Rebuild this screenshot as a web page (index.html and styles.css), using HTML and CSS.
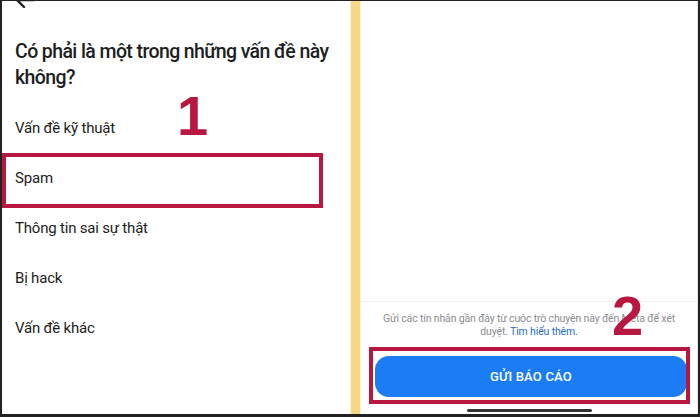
FILE: index.html
```html
<!DOCTYPE html>
<html lang="vi">
<head>
<meta charset="utf-8">
<link rel="stylesheet" href="styles.css">
</head>
<body>
<div class="frame">
  <section class="left">
    <svg class="back" width="22" height="14" viewBox="0 0 22 14"><path d="M20 -1 H4 M10 -7 L3 -1 L10 6" fill="none" stroke="#1c1e21" stroke-width="2.4" stroke-linecap="round" stroke-linejoin="round"/></svg>
    <h1 class="title">Có phải là một trong những vấn đề này không?</h1>
    <ul class="options">
      <li>Vấn đề kỹ thuật</li>
      <li>Spam</li>
      <li>Thông tin sai sự thật</li>
      <li>Bị hack</li>
      <li>Vấn đề khác</li>
    </ul>
    <div class="mark mark-1">1</div>
    <div class="hl hl-spam"></div>
  </section>
  <div class="strip"></div>
  <section class="right">
    <div class="spacer"></div>
    <p class="note">Gửi các tín nhắn gần đây từ cuộc trò chuyện này đến Meta để xét duyệt. <a class="link">Tìm hiểu thêm.</a></p>
    <div class="btn-wrap">
      <button class="send">GỬI BÁO CÁO</button>
      <div class="hl hl-btn"></div>
    </div>
    <div class="home"></div>
    <div class="mark mark-2">2</div>
  </section>
</div>
</body>
</html>
```
FILE: styles.css
```css
* { box-sizing: border-box; }
html, body { margin: 0; padding: 0; background: #fff; }
body { font-family: Roboto, "Liberation Sans", sans-serif; }
.frame {
  width: 700px;
  height: 417px;
  border-style: solid;
  border-color: #222;
  border-width: 1px 2px 3px 2px;
  display: grid;
  grid-template-columns: 348px 11px 1fr;
  overflow: hidden;
}
.left { position: relative; background: #fff; }
.back { display: block; margin-left: 12px; }
.title {
  margin: 24px 0 0 0;
  padding: 0 10px 0 13px;
  font-size: 19.5px;
  line-height: 26px;
  font-weight: 500;
  letter-spacing: -0.6px;
  color: #1c1e21;
}
.options { list-style: none; margin: 12px 0 0 0; padding: 0; }
.options li {
  height: 50px;
  display: flex;
  align-items: center;
  padding-left: 13px;
  font-size: 15px;
  letter-spacing: -0.2px;
  color: #1c1e21;
}
.strip {
  background: #f7d684;
  border-left: 1px solid #fdf3dc;
  border-right: 1px solid #fdf3dc;
}
.right {
  position: relative;
  display: flex;
  flex-direction: column;
  background: #fff;
  border-right: 1px solid #e6e6e6;
}
.spacer { flex: 1; border-bottom: 1px solid #f0f0f0; }
.note {
  margin: 0;
  padding: 10px 8px 0 8px;
  height: 44px;
  text-align: center;
  font-size: 10.5px;
  line-height: 13px;
  letter-spacing: -0.15px;
  color: #8a8d91;
}
.link { color: #1f6fc2; }
.btn-wrap { position: relative; padding: 10px 10px 0 14px; }
.send {
  display: block;
  width: 100%;
  height: 41px;
  border: 0;
  border-radius: 14px;
  background: #1b7cf4;
  color: #fff;
  font-family: Roboto, "Liberation Sans", sans-serif;
  font-size: 13px;
  font-weight: 500;
  letter-spacing: 0.2px;
}
.home {
  align-self: center;
  width: 125px;
  height: 3px;
  margin: 12px 0 2px 0;
  border-radius: 2px;
  background: #333;
}
.hl { position: absolute; border: 4px solid #b8173f; }
.hl-spam { left: 0; top: 152px; width: 321px; height: 55px; }
.hl-btn { left: 8px; top: 1px; right: 7px; bottom: -7px; }
.mark {
  position: absolute;
  color: #b8173f;
  font-family: "Liberation Sans", Arial, sans-serif;
  font-weight: 700;
  font-size: 56px;
  line-height: 1;
}
.mark-1 { left: 175px; top: 87px; }
.mark-2 { left: 251px; top: 287px; }
```
